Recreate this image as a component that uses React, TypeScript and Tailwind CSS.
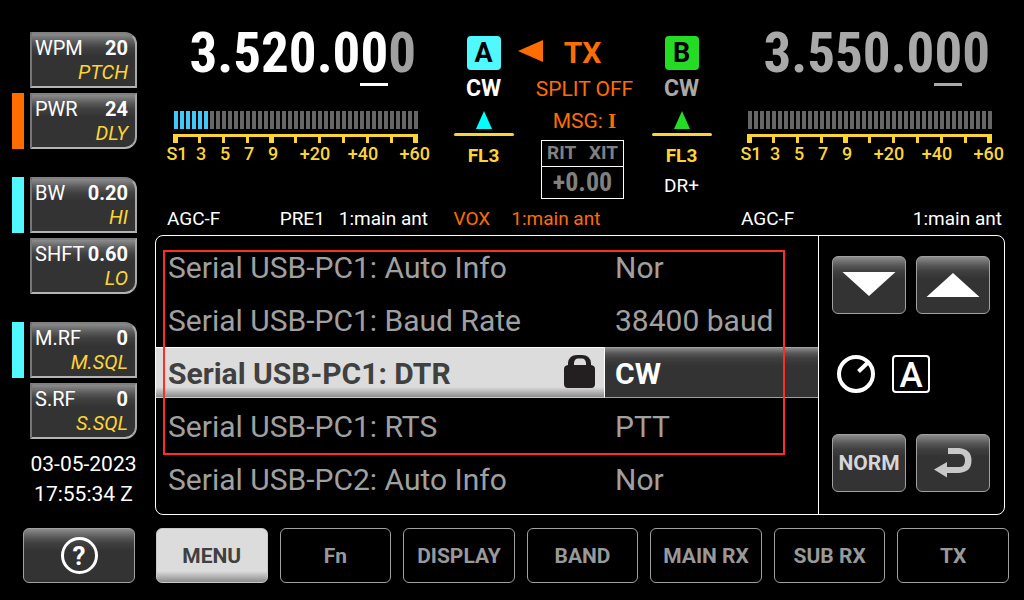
import React from "react";

const NARROW = "font-['Liberation_Sans_Narrow','Roboto_Condensed','Roboto',sans-serif]";
const DARK = "bg-[linear-gradient(to_bottom,#8c8c8c_0px,#5a5a5a_8px,#404040_14px,#333333_22px)]";

type Knob = { label: string; value: string; alt: string };
type KnobGroup = { bars: string[]; knobs: [Knob, Knob] };

const knobGroups: KnobGroup[] = [
  {
    bars: ["bg-transparent", "bg-[#ff6c00]"],
    knobs: [
      { label: "WPM", value: "20", alt: "PTCH" },
      { label: "PWR", value: "24", alt: "DLY" },
    ],
  },
  {
    bars: ["bg-[#50f8ff]", "bg-transparent"],
    knobs: [
      { label: "BW", value: "0.20", alt: "HI" },
      { label: "SHFT", value: "0.60", alt: "LO" },
    ],
  },
  {
    bars: ["bg-[#50f8ff]", "bg-transparent"],
    knobs: [
      { label: "M.RF", value: "0", alt: "M.SQL" },
      { label: "S.RF", value: "0", alt: "S.SQL" },
    ],
  },
];

const menuRows = [
  { name: "Serial USB-PC1: Auto Info", value: "Nor" },
  { name: "Serial USB-PC1: Baud Rate", value: "38400 baud" },
  { name: "Serial USB-PC1: DTR", value: "CW", selected: true },
  { name: "Serial USB-PC1: RTS", value: "PTT" },
  { name: "Serial USB-PC2: Auto Info", value: "Nor" },
];

const tabs = ["MENU", "Fn", "DISPLAY", "BAND", "MAIN RX", "SUB RX", "TX"];

function KnobButton({ knob, bar, lower }: { knob: Knob; bar: string; lower: boolean }) {
  return (
    <div className="flex gap-1.5">
      <span className={`w-3 ${bar}`} />
      <button
        type="button"
        className={`flex h-14 w-[107px] flex-col justify-center border-2 border-t-[#808080] border-r-[#a8a8a8] border-b-[#b4b4b4] border-l-[#777777] pr-[7px] pl-[3px] text-xl leading-6 ${DARK} ${
          lower ? "rounded-br-xl" : "rounded-tr-xl"
        }`}
      >
        <span className="flex w-full justify-between whitespace-nowrap">
          <span>{knob.label}</span>
          <span className="font-bold">{knob.value}</span>
        </span>
        <span className="w-full text-right text-[#fcd535] italic">{knob.alt}</span>
      </button>
    </div>
  );
}

function Meter({ level }: { level: number }) {
  const bars = Array.from({ length: 41 }, (_, i) => i);
  const ticks = Array.from({ length: 11 }, (_, i) => i);
  return (
    <div>
      <svg width="246" height="32" viewBox="0 0 246 32" className="ml-2 block" aria-hidden="true">
        {bars.map((i) => (
          <rect key={i} x={1 + i * 6} y="0" width="4" height="18" fill={i < level ? "#40c8f8" : "#666666"} />
        ))}
        <rect x="0" y="23" width="245" height="3" fill="#fcd535" />
        {ticks.map((i) => {
          const wide = i === 0 || i === 4 || i === 10;
          return <rect key={i} x={i === 0 ? 0 : i * 24 + (wide ? 0 : 1)} y="23" width={wide ? 5 : 3} height="9" fill="#fcd535" />;
        })}
      </svg>
      <div className="flex text-center text-[18px] leading-[22px] font-medium text-[#fcd535]">
        <span className="w-6">S1</span>
        <span className="w-6">3</span>
        <span className="w-6">5</span>
        <span className="w-6">7</span>
        <span className="mr-1.5 w-6">9</span>
        <span className="w-12">+20</span>
        <span className="w-12">+40</span>
        <span className="w-[43px] text-right">+60</span>
      </div>
    </div>
  );
}

function Vfo({ head, digit, tail, active }: { head: string; digit: string; tail: string; active?: boolean }) {
  return (
    <section className="w-[265px] pt-5">
      <div
        className={`flex h-[91px] justify-end pr-3.5 text-[55px] leading-[66px] font-bold ${NARROW} ${
          active ? "text-white" : "text-[#a9a9a9]"
        }`}
      >
        <span>{head}</span>
        <span className={`h-[66px] border-b-[3px] ${active ? "border-white" : "border-[#a9a9a9]"}`}>{digit}</span>
        <span className="text-[#a0a0a0]">{tail}</span>
      </div>
      <Meter level={active ? 6 : 0} />
    </section>
  );
}

function ModeColumn({ name, badge, triangle, mode, children }: { name: string; badge: string; triangle: string; mode: string; children?: React.ReactNode }) {
  return (
    <div className="flex w-[60px] flex-col items-center pt-9">
      <span className={`flex size-[34px] items-center justify-center rounded text-[27px] font-bold text-black ${badge}`}>{name}</span>
      <span className={`mt-1 text-[23px] leading-[30px] font-bold ${mode}`}>CW</span>
      <svg width="60" height="25" viewBox="0 0 60 25" className="mt-[7px] block" aria-hidden="true">
        <path d="M30 0 L38 18 H22 Z" fill={triangle} />
        <rect x="0" y="22" width="60" height="3" rx="1.5" fill="#fcd535" />
      </svg>
      <span className="mt-2 text-[19px] leading-6 font-bold text-[#fcd535]">FL3</span>
      {children}
    </div>
  );
}

function DarkButton({ label, children }: { label: string; children: React.ReactNode }) {
  return (
    <button
      type="button"
      aria-label={label}
      className={`flex h-[58px] items-center justify-center rounded-md border border-[#a0a0a0] text-[21px] font-bold text-[#d6d6d6] ${DARK}`}
    >
      {children}
    </button>
  );
}

function Lock() {
  return (
    <svg width="31" height="33" viewBox="0 0 31 33" aria-hidden="true" className="mb-1">
      <path
        fill="#231f20"
        fillRule="evenodd"
        d="M4 10 V8 Q5 0 13 0 H18 Q26 0 27 8 V10 Q31 10.500 31 14 V29 Q31 33 27 33 H4 Q0 33 0 29 V14 Q0 10.500 4 10 Z M10 10 H22 V8 Q21.500 3.500 18 3.500 H14 Q10.500 3.500 10 8 Z"
      />
    </svg>
  );
}

export default function App() {
  return (
    <div className="flex min-h-screen min-w-[1024px] flex-col bg-black font-['Roboto',sans-serif] text-white">
      <div className="flex">
        <aside className="flex w-[155px] shrink-0 flex-col gap-7 pt-8 pl-3">
          {knobGroups.map((group) => (
            <div key={group.knobs[0].label} className="flex flex-col gap-[5px]">
              {group.knobs.map((knob, i) => (
                <KnobButton key={knob.label} knob={knob} bar={group.bars[i]} lower={i === 1} />
              ))}
            </div>
          ))}
          <div className="-mt-[18px] pl-[18px] text-[21px] leading-[30px] whitespace-nowrap">
            <div className="w-[107px] text-center">03-05-2023</div>
            <div className="w-[107px] text-center">17:55:34 Z</div>
          </div>
        </aside>

        <main className="flex-1 pr-[19px]">
          <header className="flex h-[207px] justify-between pr-px pl-2.5">
            <Vfo head="3.520.0" digit="0" tail="0" active />
            <div className="flex w-[262px] pr-1">
              <ModeColumn name="A" badge="bg-[#50f8ff]" triangle="#00ffff" mode="text-white" />
              <div className="flex flex-1 flex-col items-center pt-9 text-[21px] whitespace-nowrap text-[#ff6c00]">
                <div className="grid w-full grid-cols-[1fr_auto_1fr] items-center text-[30px] leading-[34px] font-bold">
                  <svg width="25" height="22" viewBox="0 0 25 22" className="-mt-1 ml-1" aria-hidden="true">
                    <path d="M0 11 L25 0 V22 Z" fill="#ff6c00" />
                  </svg>
                  <span>TX</span>
                </div>
                <div className="mt-[3px] pl-1 leading-8">SPLIT OFF</div>
                <div className="pl-1 leading-8">
                  MSG: <span className="font-['Liberation_Serif',serif] font-bold">I</span>
                </div>
                <div className="mt-[3px] w-[83px] border border-white text-center text-[#808080]">
                  <div className="flex h-[25px] items-center justify-between px-[5px] text-[19px] font-bold">
                    <span>RIT</span>
                    <span>XIT</span>
                  </div>
                  <div className={`h-8 border-t border-white text-[26px] leading-[30px] font-bold ${NARROW}`}>+0.00</div>
                </div>
              </div>
              <ModeColumn name="B" badge="bg-[#24dc24]" triangle="#24dc24" mode="text-[#a9a9a9]">
                <span className="mt-1.5 text-[19px] leading-6">DR+</span>
              </ModeColumn>
            </div>
            <Vfo head="3.550.0" digit="0" tail="0" />
          </header>

          <div className="flex h-7 justify-between pr-px pl-2.5 text-[19px] leading-[23px] whitespace-nowrap">
            <div className="flex w-[265px] justify-between px-0.5">
              <span>AGC-F</span>
              <span className="flex gap-3.5">
                <span>PRE1</span>
                <span>1:main ant</span>
              </span>
            </div>
            <div className="flex w-[262px] gap-[21px] text-[#ff6c00]">
              <span>VOX</span>
              <span>1:main ant</span>
            </div>
            <div className="flex w-[265px] justify-between px-0.5">
              <span>AGC-F</span>
              <span>1:main ant</span>
            </div>
          </div>

          <section className="flex rounded-lg border border-white">
            <div className="relative flex-1 pt-[5px] pb-2">
              <table className="w-full table-fixed border-collapse text-left text-[30px] whitespace-nowrap text-[#a0a0a0]">
                <colgroup>
                  <col />
                  <col className="w-[214px]" />
                </colgroup>
                <tbody>
                  {menuRows.map((row) => (
                    <tr key={row.name} className="h-[53px]">
                      <th scope="row" className="p-0 align-top font-normal">
                        <div
                          className={`flex h-[51px] items-center justify-between border-y pt-0.5 pr-[9px] pl-3 ${
                            row.selected
                              ? "border-t-white border-b-[#c8c8c8] bg-[linear-gradient(to_top,#8c8c8c_0px,#dcdcdc_10px)] font-bold text-[#404040]"
                              : "border-transparent"
                          }`}
                        >
                          {row.name}
                          {row.selected && <Lock />}
                        </div>
                      </th>
                      <td className="p-0 align-top">
                        <div
                          className={`flex h-[51px] items-center border-y border-l pt-0.5 pl-2.5 ${
                            row.selected
                              ? "border-y-[#a0a0a0] border-l-white bg-[linear-gradient(to_bottom,#8c8c8c_0px,#5a5a5a_5px,#404040_10px,#333333_18px)] font-bold text-white"
                              : "border-transparent"
                          }`}
                        >
                          {row.value}
                        </div>
                      </td>
                    </tr>
                  ))}
                </tbody>
              </table>
              <div className="pointer-events-none absolute top-3.5 right-[33px] bottom-[59px] left-[7px] border-2 border-[#ff2d28]" />
            </div>
            <div className="flex w-[186px] flex-col justify-between border-l border-white pt-5 pr-3.5 pb-[22px] pl-[13px]">
              <div className="grid grid-cols-2 gap-2.5">
                <DarkButton label="Down">
                  <svg width="54" height="24" viewBox="0 0 54 24" className="-mt-0.5" aria-hidden="true">
                    <path d="M0.500 0 H53.500 L27 24 Z" fill="#ffffff" />
                  </svg>
                </DarkButton>
                <DarkButton label="Up">
                  <svg width="54" height="24" viewBox="0 0 54 24" aria-hidden="true">
                    <path d="M0.500 24 H53.500 L27 0 Z" fill="#ffffff" />
                  </svg>
                </DarkButton>
              </div>
              <div className="flex gap-[17px] pl-[5px]">
                <svg width="38" height="38" viewBox="0 0 38 38" fill="none" stroke="#ffffff" strokeWidth="4" aria-hidden="true">
                  <circle cx="19" cy="19" r="17" />
                  <path d="M21.500 16.500 L31 7.500" />
                </svg>
                <span className="flex size-[38px] items-center justify-center rounded border-2 border-white pt-1 text-[35px] leading-8 font-medium">
                  A
                </span>
              </div>
              <div className="grid grid-cols-2 gap-2.5">
                <DarkButton label="NORM">
                  <span className="pt-0.5">NORM</span>
                </DarkButton>
                <DarkButton label="Back">
                  <svg width="38" height="30" viewBox="0 0 38 30" aria-hidden="true">
                    <path d="M0 21.500 L13 14 V19 H26 Q31 18.500 31 12.500 Q31 6.500 26 6 H14 V0 H25 Q37.500 1 37.500 12.500 Q37.500 24 25 25 H13 V29.500 Z" fill="#c8c8c8" />
                  </svg>
                </DarkButton>
              </div>
            </div>
          </section>
        </main>
      </div>

      <nav className="mt-[13px] flex pr-[15px] pl-[23px]">
        <button
          type="button"
          aria-label="Help"
          className={`mr-[21px] flex h-[55px] w-28 items-center justify-center rounded-md border border-[#a0a0a0] ${DARK}`}
        >
          <span className="flex size-[37px] items-center justify-center rounded-full border-[3px] border-white text-[26px] leading-none font-bold">?</span>
        </button>
        <div className="grid flex-1 grid-cols-7 gap-3">
          {tabs.map((tab) => (
            <button
              key={tab}
              type="button"
              className={`h-[55px] rounded-md border pt-0.5 text-[21px] font-bold whitespace-nowrap ${
                tab === "MENU"
                  ? "border-[#c8c8c8] bg-[linear-gradient(to_top,#8c8c8c_0px,#dcdcdc_11px)] text-[#404040]"
                  : "border-[#a0a0a0] bg-black text-[#999999]"
              }`}
            >
              {tab}
            </button>
          ))}
        </div>
      </nav>
    </div>
  );
}
